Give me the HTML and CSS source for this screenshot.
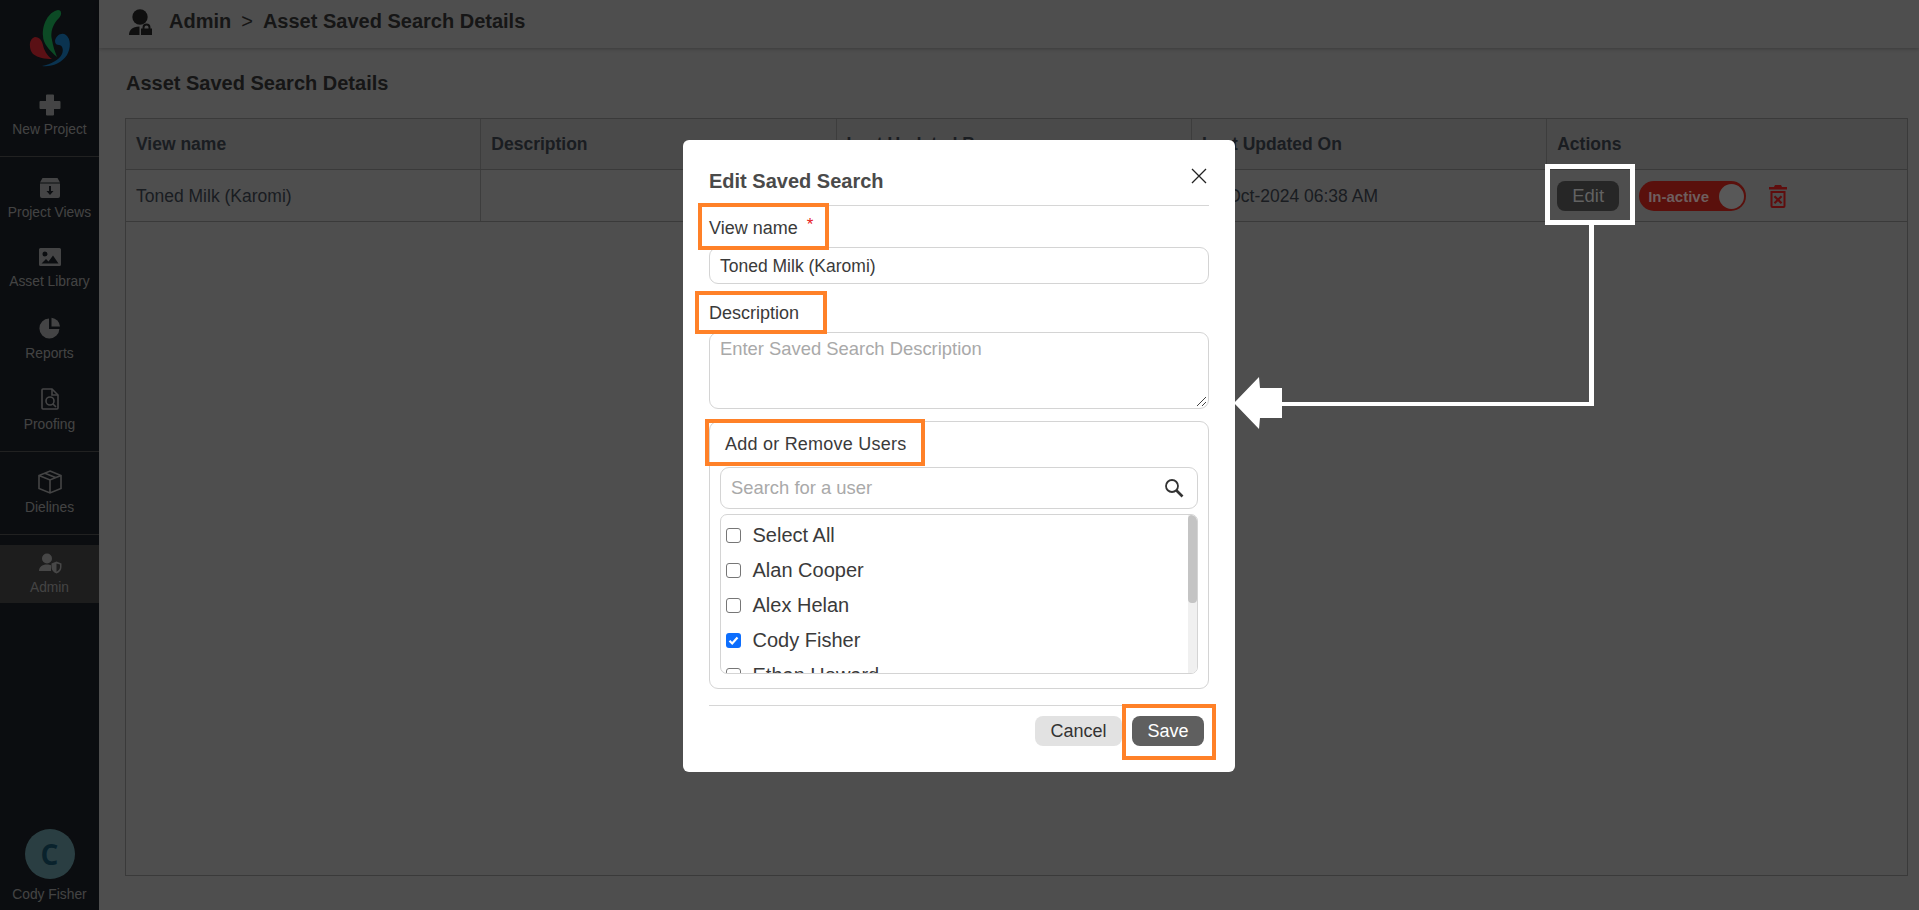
FILE: index.html
```html
<!DOCTYPE html>
<html lang="en">
<head>
<meta charset="utf-8">
<title>Asset Saved Search Details</title>
<link rel="stylesheet" href="styles.css">
</head>
<body>
<div class="app">
  <aside class="sidebar">
    <div class="logo">
      <svg width="42" height="58" viewBox="0 0 42 58">
        <path class="lg-green" d="M29 0C33 0 33 5 30 8C24 14 21 22 23 30C24 36 26 42 28 47C20 40 14 33 14 26C13 15 19 2 29 0Z"/>
        <path class="lg-blue" d="M26 31C27 25 33 22 37 25C42 29 42 38 38 45C32 54 22 57 13 56C22 54 30 50 33 44C35 39 33 35 30 35C28 35 26 34 26 31Z"/>
        <path class="lg-red" d="M6 27C11 27 13 31 14 35C15 40 18 46 23 49C16 49 9 48 4 44C0 40-1 29 6 27Z"/>
      </svg>
    </div>
    <a class="nav-item nav-new">
      <svg class="ic" width="24" height="24" viewBox="0 0 24 24"><path d="M9 1.500h6a1 1 0 0 1 1 1V8h5.500a1 1 0 0 1 1 1v6a1 1 0 0 1-1 1H16v5.500a1 1 0 0 1-1 1H9a1 1 0 0 1-1-1V16H2.500a1 1 0 0 1-1-1V9a1 1 0 0 1 1-1H8V2.500a1 1 0 0 1 1-1Z"/></svg>
      <span>New Project</span>
    </a>
    <hr class="rule rule-a">
    <a class="nav-item nav-views">
      <svg class="ic" width="24" height="24" viewBox="0 0 24 24"><path fill-rule="evenodd" d="M4.500 2h15L22 6.500H2ZM2 7.500h20V20a2 2 0 0 1-2 2H4a2 2 0 0 1-2-2ZM11 10v5H8.500l3.500 4 3.500-4H13v-5Z"/></svg>
      <span>Project Views</span>
    </a>
    <a class="nav-item nav-lib">
      <svg class="ic" width="24" height="24" viewBox="0 0 24 24"><path fill-rule="evenodd" d="M2.500 3h19A1.500 1.500 0 0 1 23 4.500v15a1.500 1.500 0 0 1-1.500 1.500h-19A1.500 1.500 0 0 1 1 19.500v-15A1.500 1.500 0 0 1 2.500 3ZM7 6.500a2.500 2.500 0 1 0 0 5 2.500 2.500 0 0 0 0-5ZM3.500 18.500h17l-5.500-8-4.500 6-2.500-2.500Z"/></svg>
      <span>Asset Library</span>
    </a>
    <a class="nav-item nav-rep">
      <svg class="ic" width="24" height="24" viewBox="0 0 24 24"><path d="M11 2.500v10.500h10.400A10 10 0 1 1 11 2.500Z"/><path d="M13.500 1.800A9.500 9.500 0 0 1 22 10.500h-8.500Z"/></svg>
      <span>Reports</span>
    </a>
    <a class="nav-item nav-proof">
      <svg class="ic ic-line" width="24" height="24" viewBox="0 0 24 24"><path d="M5 2h9l6 6v13a1 1 0 0 1-1 1H5a1 1 0 0 1-1-1V3a1 1 0 0 1 1-1Z"/><circle cx="12" cy="14" r="4"/><path d="M15 17l3 3M14 2v6h6"/></svg>
      <span>Proofing</span>
    </a>
    <hr class="rule rule-b">
    <a class="nav-item nav-die">
      <svg class="ic ic-line" width="24" height="24" viewBox="0 0 24 24"><path d="M12 1l11 4.500v13L12 23 1 18.500v-13ZM1 5.500 12 10l11-4.500M12 10v13M7 3.200l11 4.500"/></svg>
      <span>Dielines</span>
    </a>
    <hr class="rule rule-c">
    <a class="nav-item nav-admin">
      <svg class="ic" width="24" height="24" viewBox="0 0 24 24"><circle cx="9" cy="7.500" r="5"/><path d="M1 20c0-4 3-6.500 8-6.500 1.500 0 3 .2 4 .7V20Z"/><path fill-rule="evenodd" d="M18.500 10.500l5 2v3.500c0 3-2 5.500-5 6.500-3-1-5-3.500-5-6.500v-3.500Zm0 2v8.200c2-.9 3.500-2.700 3.500-4.700v-2.400Z"/></svg>
      <span>Admin</span>
    </a>
    <div class="user">
      <div class="avatar">C</div>
      <span>Cody Fisher</span>
    </div>
  </aside>
  <main class="main">
    <header class="topbar">
      <svg class="top-ic" width="24" height="26" viewBox="0 0 24 26"><circle cx="11" cy="8" r="7.700"/><path d="M0 26C0 21 3 18 10.500 17.500V26Z"/><path fill-rule="evenodd" d="M12 26V19.500h1.500V18.500a4 4 0 0 1 8 0v1H23V26ZM15.500 18.500v1h4v-1a2 2 0 0 0-4 0Z"/></svg>
      <span>Admin</span><span class="sep">&gt;</span><span>Asset Saved Search Details</span>
    </header>
    <section class="content">
      <h1 class="page-title">Asset Saved Search Details</h1>
      <div class="table-wrap">
        <div class="grid head">
          <div>View name</div><div>Description</div><div>Last Updated By</div><div>Last Updated On</div><div>Actions</div>
        </div>
        <div class="grid row">
          <div>Toned Milk (Karomi)</div><div></div><div></div><div>01-Oct-2024 06:38 AM</div>
          <div class="actions">
            <button class="btn-edit">Edit</button>
            <span class="toggle"><b>In-active</b><i></i></span>
            <svg class="trash" width="18" height="23" viewBox="0 0 18 23"><path fill-rule="evenodd" d="M6 0h6l1 2h5v2.500H0V2h5ZM1.500 6h15v15a2 2 0 0 1-2 2h-11a2 2 0 0 1-2-2Zm2 2v13h11V8Zm2.700 2.500L9 13.300l2.800-2.800 1.500 1.500-2.800 2.800 2.800 2.800-1.500 1.500L9 16.300l-2.800 2.800-1.500-1.500 2.800-2.800-2.800-2.800Z"/></svg>
          </div>
        </div>
      </div>
    </section>
  </main>
</div>

<div class="backdrop"></div>

<div class="modal">
  <div class="m-head">
    <h2>Edit Saved Search</h2>
    <svg class="close" width="16" height="16" viewBox="0 0 16 16"><path d="M1 1l14 14M15 1L1 15"/></svg>
  </div>
  <label class="lbl lbl-name">View name <em>*</em></label>
  <div class="field field-name">Toned Milk (Karomi)</div>
  <label class="lbl lbl-desc">Description</label>
  <div class="field field-desc">Enter Saved Search Description
    <svg class="grip" width="12" height="12" viewBox="0 0 12 12"><path d="M2 11L11 2M7 11l4-4"/></svg>
  </div>
  <div class="users">
    <div class="users-title">Add or Remove Users</div>
    <div class="search">Search for a user
      <svg width="22" height="22" viewBox="0 0 22 22"><circle cx="9" cy="9" r="6"/><path class="thick" d="M13.500 13.500l6 6"/></svg>
    </div>
    <div class="list">
      <div class="list-items">
        <div class="opt"><span class="cb"></span>Select All</div>
        <div class="opt"><span class="cb"></span>Alan Cooper</div>
        <div class="opt"><span class="cb"></span>Alex Helan</div>
        <div class="opt"><span class="cb on"><svg width="15" height="15" viewBox="0 0 15 15"><path d="M3.500 7.800l2.700 2.700 5.300-6"/></svg></span>Cody Fisher</div>
        <div class="opt"><span class="cb"></span>Ethan Howard</div>
      </div>
      <div class="scroll"><div class="thumb"></div></div>
    </div>
  </div>
  <div class="m-foot">
    <button class="btn-cancel">Cancel</button>
    <button class="btn-save">Save</button>
  </div>
  <span class="mark mark-name"></span>
  <span class="mark mark-desc"></span>
  <span class="mark mark-users"></span>
  <span class="mark mark-save"></span>
</div>

<span class="edit-mark"></span>
<span class="conn-v"></span>
<svg class="arrow" width="49" height="52" viewBox="0 0 49 52">
  <path d="M0 26 25 0 26 11H48V41H26L25 52Z"/>
</svg>
<span class="conn-h"></span>
</body>
</html>
```

FILE: styles.css
```css
* { box-sizing: border-box; }
html, body { margin: 0; height: 910px; overflow: hidden; }
body { font-family: "Liberation Sans", Arial, sans-serif; background: #fff; color: #55606e; }

.app { display: flex; height: 910px; }

/* sidebar */
.sidebar { width: 99px; flex: none; background: #252b35; color: #dcdcdc; display: flex; flex-direction: column; }
.logo { position: relative; z-index: 1; height: 58px; margin-top: 10px; padding-left: 29px; }
.lg-green { fill: #0c4a25; }
.lg-blue { fill: #0a3350; }
.lg-red { fill: #5a1015; }
.nav-item { display: flex; flex-direction: column; align-items: center; font-size: 13.8px; line-height: 16px; white-space: nowrap; }
.ic { fill: #fff; opacity: .85; }
.ic-line { fill: none; stroke: #fff; stroke-width: 1.6; }
.nav-new { margin-top: 25px; gap: 5px; }
.rule { width: 100%; height: 1px; border: 0; margin: 0; background: #6c6c6c; }
.rule-a { margin-top: 18px; }
.nav-views { margin-top: 19px; gap: 5px; }
.nav-lib { margin-top: 24px; gap: 5px; }
.nav-rep { margin-top: 26px; gap: 6px; }
.nav-proof { margin-top: 25px; gap: 6px; }
.rule-b { margin-top: 18px; }
.nav-die { margin-top: 18px; gap: 6px; }
.rule-c { margin-top: 18px; }
.nav-admin { margin-top: 10px; height: 58px; padding-top: 6px; gap: 5px; background: #5e5e5e; }
.user { margin-top: auto; display: flex; flex-direction: column; align-items: center; font-size: 13.8px; line-height: 16px; padding-bottom: 7px; gap: 8px; }
.avatar { width: 50px; height: 50px; border-radius: 50%; background: #8accd8; color: #1f6f90; font: 700 28px/50px "Open Sans", sans-serif; text-align: center; }

/* main */
.main { flex: 1; min-width: 0; display: flex; flex-direction: column; }
.topbar { height: 48px; display: flex; align-items: center; padding: 0 0 0 30px; font-size: 20px; font-weight: 700; color: #4a4a4a; box-shadow: 0 1px 4px rgba(0,0,0,.25); }
.top-ic { margin-right: 16px; margin-top: -5px; fill: #333; }
.topbar span { position: relative; top: -3px; }
.sep { margin: 0 10px; font-weight: 400; }
.content { flex: 1; padding: 0 11px 34px 26px; display: flex; flex-direction: column; }
.page-title { margin: 24px 0 23px 1px; font-size: 20px; line-height: 23px; font-weight: 700; color: #4a4a4a; }
.table-wrap { flex: 1; border: 1px solid #bdbdbd; }
.grid { display: grid; grid-template-columns: 355.300px 355.300px 355.300px 355.300px 1fr; border-bottom: 1px solid #bdbdbd; }
.grid > div { padding: 0 10px; display: flex; align-items: center; border-right: 1px solid #c6c6c6; }
.grid > div:last-child { border-right: 0; }
.head { height: 51px; background: #f1f1f1; font-size: 17.500px; font-weight: 700; }
.row { height: 52px; font-size: 17.500px; }
.row > div { padding-top: 1px; }
.actions > * { position: relative; z-index: 1; flex: none; }
.btn-edit { width: 62px; height: 30px; border: 0; border-radius: 8px; background: #262626; color: #626262; font: 18.500px "Liberation Sans", sans-serif; padding: 0; margin-right: 20px; }
.toggle { width: 107px; height: 30px; border-radius: 15px; background: #5a100c; color: #6e5e5e; font-size: 15px; padding-left: 9px; display: flex; align-items: center; justify-content: space-between; margin-right: 23px; }
.toggle i { width: 25px; height: 25px; border-radius: 50%; background: #585858; margin-right: 2px; }
.trash { fill: #5f0d0d; }

/* backdrop and modal */
.backdrop { position: fixed; inset: 0; background: rgba(0,0,0,.695); }
.modal { position: absolute; z-index: 2; left: 683px; top: 140px; width: 552px; height: 632px; background: #fff; border-radius: 6px; padding: 0 26px; display: flex; flex-direction: column; color: #3a3a3a; }
.m-head { height: 66px; border-bottom: 1px solid #d6d6d6; display: flex; justify-content: space-between; align-items: flex-start; padding-top: 29px; }
.m-head h2 { margin: 0; font-size: 20px; line-height: 24px; font-weight: 700; color: #4a4a4a; }
.close { fill: none; stroke: #222; stroke-width: 1.3; margin: -1px 2px 0 0; }
.lbl { font-size: 18px; line-height: 22px; display: block; }
.lbl em { color: #e62222; font-style: normal; font-size: 17px; position: relative; top: -4px; left: 4px; }
.lbl-name { margin-top: 11px; }
.field { border: 1px solid #d4d4d4; border-radius: 9px; padding: 0 10px; font-size: 17.500px; color: #3a3a3a; }
.field-name { height: 37px; line-height: 37px; margin-top: 7px; }
.lbl-desc { margin-top: 18px; }
.field-desc { height: 77px; line-height: 32px; font-size: 18.400px; margin-top: 8px; color: #a9a9a9; position: relative; }
.grip { position: absolute; right: 1px; bottom: 1px; fill: none; stroke: #444; stroke-width: 1; }
.users { height: 268px; border: 1px solid #d4d4d4; border-radius: 9px; margin-top: 12px; padding: 0 10px; }
.users-title { font-size: 18px; letter-spacing: .23px; line-height: 22px; margin: 11px 0 0 5px; }
.search { height: 42px; border: 1px solid #d4d4d4; border-radius: 9px; margin-top: 12px; padding: 0 10px; font-size: 18.400px; color: #a9a9a9; display: flex; align-items: center; justify-content: space-between; }
.search svg { fill: none; stroke: #333; stroke-width: 1.8; margin-right: 2px; }
.search .thick { stroke-width: 2.6; }
.list { height: 160px; border: 1px solid #d4d4d4; border-radius: 7px; margin-top: 5px; overflow: hidden; display: flex; }
.list-items { flex: 1; padding-top: 3px; }
.opt { height: 35px; display: flex; align-items: center; font-size: 20px; padding-left: 5px; white-space: nowrap; color: #3a3a3a; }
.cb { width: 15px; height: 15px; border: 1px solid #767676; border-radius: 3px; margin-right: 11.500px; flex: none; background: #fff; display: block; }
.cb.on { border: 0; background: #0d6efd; }
.cb svg { display: block; fill: none; stroke: #fff; stroke-width: 2.200; }
.scroll { width: 9px; background: #f0f0f0; }
.thumb { height: 88px; background: #c4c4c4; border-radius: 4px; }
.m-foot { margin-top: 16px; border-top: 1px solid #d6d6d6; padding-top: 10px; display: flex; justify-content: flex-end; gap: 10px; padding-right: 5px; }
.m-foot button { height: 30px; border: 0; border-radius: 8px; font: 18px "Liberation Sans", sans-serif; padding: 0; }
.btn-cancel { width: 87px; background: #e2e2e2; color: #333; }
.btn-save { width: 72px; background: #5f5f5f; color: #fff; }

/* annotations */
.mark { position: absolute; border: 4.500px solid #ff8128; }
.mark-name { left: 15px; top: 63px; width: 131px; height: 47px; }
.mark-desc { left: 12px; top: 151px; width: 132px; height: 43px; }
.mark-users { left: 22px; top: 279px; width: 220px; height: 47px; }
.mark-save { left: 439px; top: 564px; width: 94px; height: 56px; }
.edit-mark { position: absolute; z-index: 2; left: 1545px; top: 164px; width: 90px; height: 61px; border: 5px solid #fff; }
.conn-v { position: absolute; z-index: 2; left: 1589px; top: 225px; width: 5px; height: 181px; background: #fff; }
.conn-h { position: absolute; z-index: 2; left: 1282px; top: 402px; width: 312px; height: 4px; background: #fff; }
.arrow { position: absolute; z-index: 2; left: 1234px; top: 377px; fill: #fff; }
```
